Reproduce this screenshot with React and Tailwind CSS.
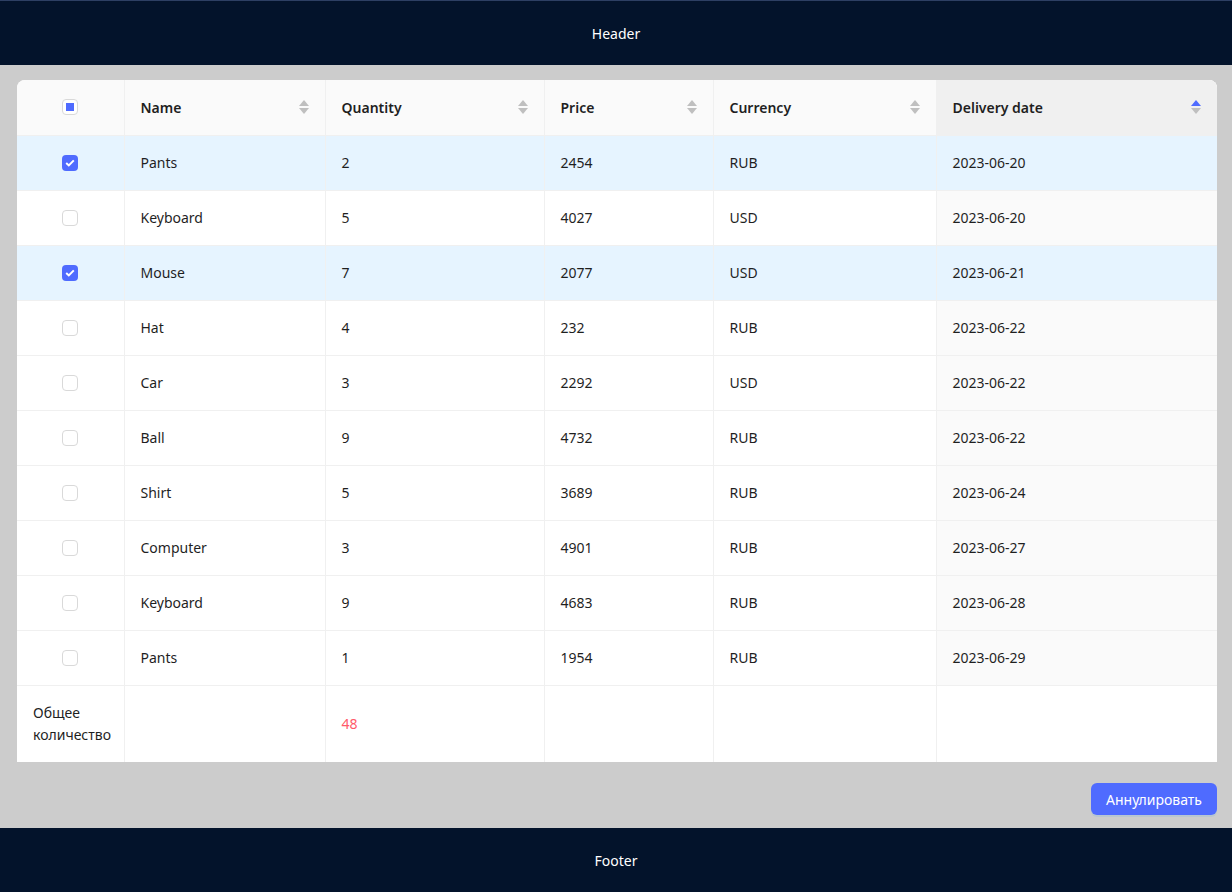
import { useState } from "react";

const rows = [
  { name: "Pants", qty: 2, price: 2454, cur: "RUB", date: "2023-06-20", checked: true },
  { name: "Keyboard", qty: 5, price: 4027, cur: "USD", date: "2023-06-20" },
  { name: "Mouse", qty: 7, price: 2077, cur: "USD", date: "2023-06-21", checked: true },
  { name: "Hat", qty: 4, price: 232, cur: "RUB", date: "2023-06-22" },
  { name: "Car", qty: 3, price: 2292, cur: "USD", date: "2023-06-22" },
  { name: "Ball", qty: 9, price: 4732, cur: "RUB", date: "2023-06-22" },
  { name: "Shirt", qty: 5, price: 3689, cur: "RUB", date: "2023-06-24" },
  { name: "Computer", qty: 3, price: 4901, cur: "RUB", date: "2023-06-27" },
  { name: "Keyboard", qty: 9, price: 4683, cur: "RUB", date: "2023-06-28" },
  { name: "Pants", qty: 1, price: 1954, cur: "RUB", date: "2023-06-29" },
];

// ant-style sorter carets
const Sorter = ({ active }) => (
  <span className="flex flex-col items-center gap-[2px]">
    <svg width="10" height="6" viewBox="0 0 10 6">
      <path d="M5 0 L10 6 L0 6 Z" fill={active ? "#4f6bff" : "#bfbfbf"} />
    </svg>
    <svg width="10" height="6" viewBox="0 0 10 6">
      <path d="M0 0 L10 0 L5 6 Z" fill="#bfbfbf" />
    </svg>
  </span>
);

const Checkbox = ({ checked, indeterminate, onClick }) => {
  if (checked) {
    return (
      <span onClick={onClick} className="w-4 h-4 rounded-[4px] bg-[#4f6bff] flex items-center justify-center cursor-pointer">
        <svg width="10" height="8" viewBox="0 0 10 8">
          <path d="M1.2 4 L3.8 6.4 L8.8 1.4" fill="none" stroke="white" strokeWidth="2" />
        </svg>
      </span>
    );
  }
  return (
    <span onClick={onClick} className="w-4 h-4 rounded-[4px] bg-white border border-[#d9d9d9] flex items-center justify-center cursor-pointer">
      {indeterminate && <span className="w-2 h-2 bg-[#4f6bff]" />}
    </span>
  );
};

const HeadCell = ({ children, active }) => (
  <th className={`px-4 text-left font-semibold ${active ? "bg-[#f0f0f0]" : "border-r border-[#f0f0f0]"}`}>
    <div className="flex items-center justify-between">
      <span>{children}</span>
      <Sorter active={active} />
    </div>
  </th>
);

export default function App() {
  const [checked, setChecked] = useState(rows.map((r) => !!r.checked));

  const toggle = (i) => {
    const next = [...checked];
    next[i] = !next[i];
    setChecked(next);
  };

  const total = rows.reduce((s, r) => s + r.qty, 0);
  const cell = "px-4 border-r border-[#f0f0f0]";

  return (
    <div className="min-h-[892px] flex flex-col border-t border-[#2d3f63] text-[14px] text-[#1f1f1f]" style={{ fontFamily: '"Noto Sans", "Open Sans", sans-serif' }}>
      <div className="h-[64px] bg-[#03132b] flex items-center justify-center text-white">Header</div>

      <div className="flex-1 bg-[#cccccc] pl-[17px] pr-[15px] pt-[15px] pb-[13px] flex flex-col">
        <div className="bg-white rounded-t-lg overflow-hidden">
          <table className="w-full border-collapse table-fixed">
            <colgroup>
              <col className="w-[107px]" />
              <col className="w-[201px]" />
              <col className="w-[219px]" />
              <col className="w-[169px]" />
              <col className="w-[223px]" />
              <col className="w-[281px]" />
            </colgroup>
            <thead>
              <tr className="h-[55px] bg-[#fafafa] border-b border-[#f0f0f0]">
                <th className="border-r border-[#f0f0f0]">
                  <div className="flex justify-center">
                    <Checkbox indeterminate />
                  </div>
                </th>
                <HeadCell>Name</HeadCell>
                <HeadCell>Quantity</HeadCell>
                <HeadCell>Price</HeadCell>
                <HeadCell>Currency</HeadCell>
                <HeadCell active>Delivery date</HeadCell>
              </tr>
            </thead>
            <tbody>
              {rows.map((r, i) => {
                const sel = checked[i];
                return (
                  <tr key={i} className={`h-[55px] border-b border-[#f0f0f0] ${sel ? "bg-[#e6f4ff]" : "bg-white"}`}>
                    <td className="border-r border-[#f0f0f0]">
                      <div className="flex justify-center">
                        <Checkbox checked={sel} onClick={() => toggle(i)} />
                      </div>
                    </td>
                    <td className={cell}>{r.name}</td>
                    <td className={cell}>{r.qty}</td>
                    <td className={cell}>{r.price}</td>
                    <td className={cell}>{r.cur}</td>
                    <td className={`px-4 ${sel ? "" : "bg-[#fafafa]"}`}>{r.date}</td>
                  </tr>
                );
              })}
              <tr className="h-[77px]">
                <td className="px-4 leading-[22px] border-r border-[#f0f0f0]">Общее количество</td>
                <td className={cell}></td>
                <td className={`${cell} text-[#ff5a6a]`}>{total}</td>
                <td className={cell}></td>
                <td className={cell}></td>
                <td className="px-4"></td>
              </tr>
            </tbody>
          </table>
        </div>

        <div className="flex justify-end mt-[21px]">
          <button className="h-8 px-[15px] rounded-md bg-[#4f6bff] text-white shadow-[0_2px_0_rgba(5,145,255,0.1)]">
            Аннулировать
          </button>
        </div>
      </div>

      <div className="h-[64px] bg-[#03132b] flex items-center justify-center text-white">Footer</div>
    </div>
  );
}
